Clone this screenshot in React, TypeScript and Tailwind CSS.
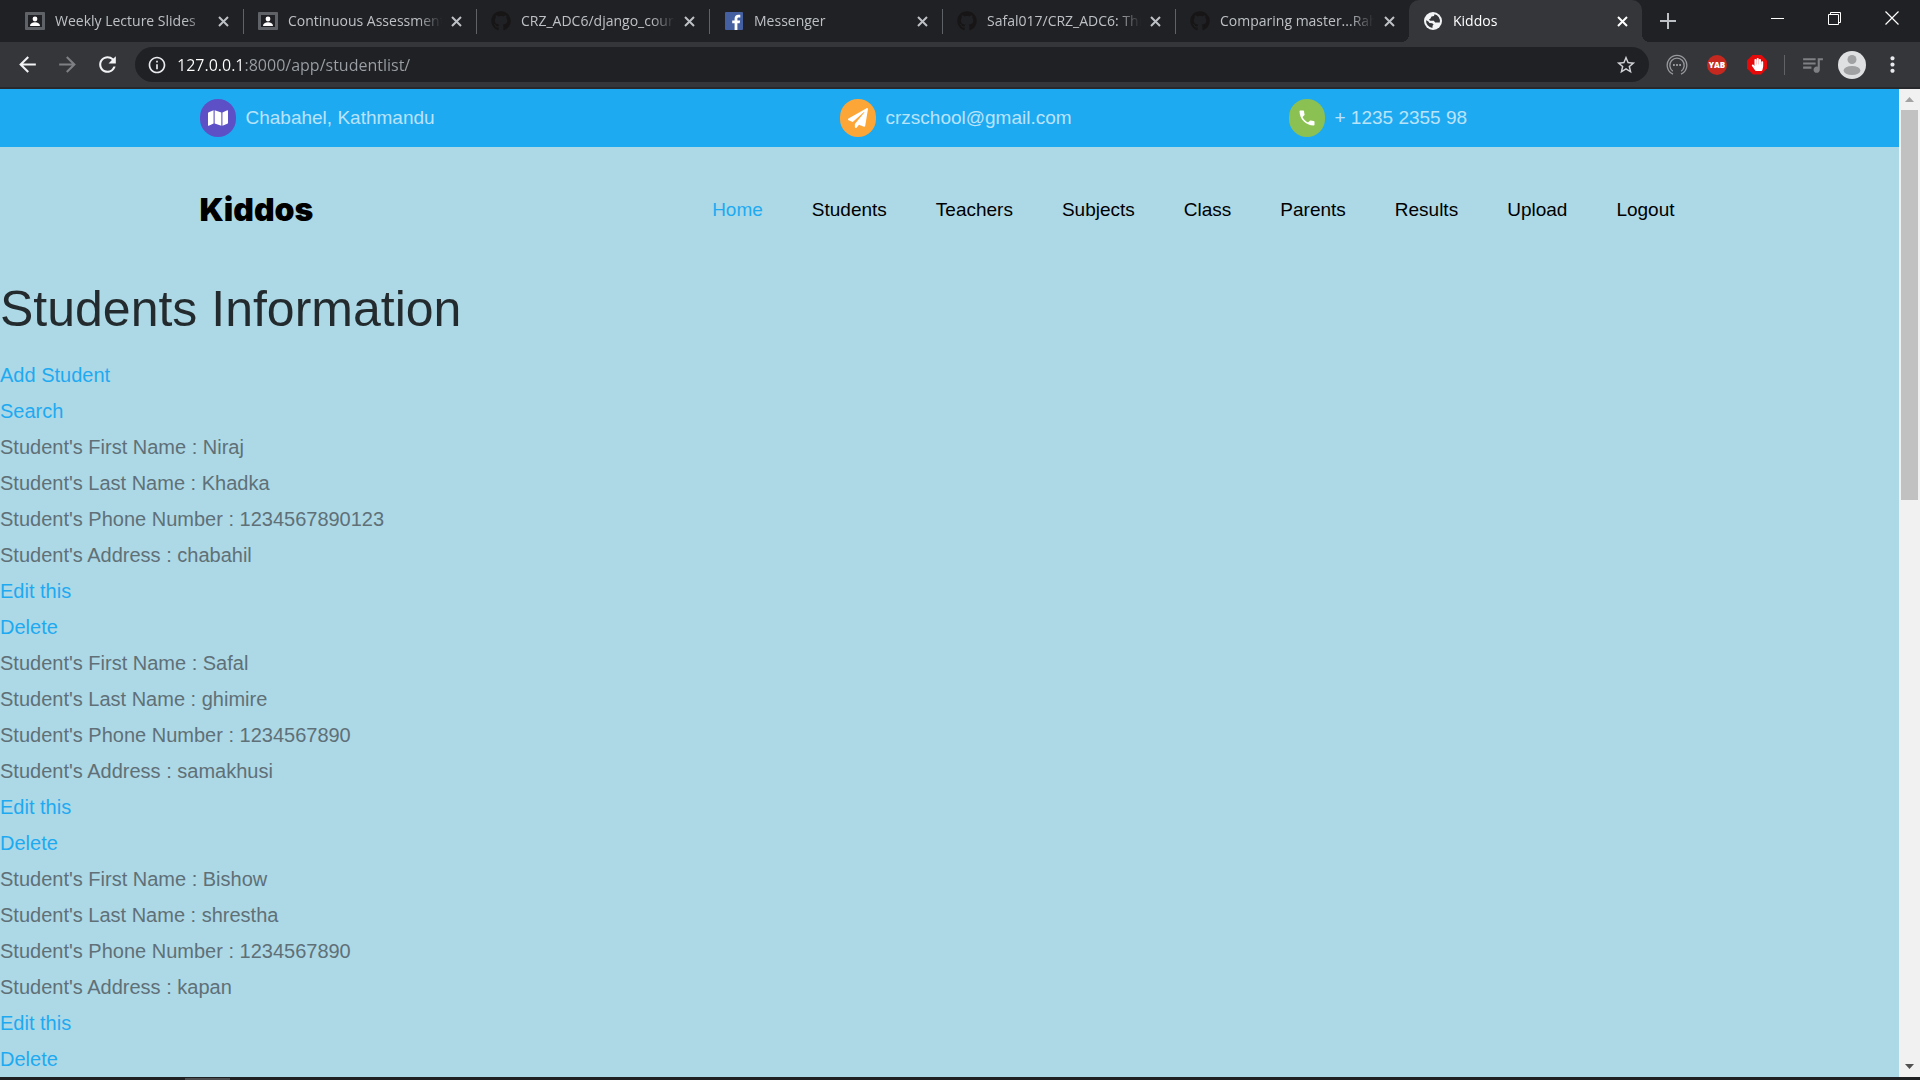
import type { ReactNode } from "react";
import { FaGithub, FaHandPaper, FaMap, FaPaperPlane } from "react-icons/fa";
import {
  MdArrowBack,
  MdArrowForward,
  MdInfoOutline,
  MdMoreVert,
  MdPhone,
  MdQueueMusic,
  MdRefresh,
  MdStarBorder,
} from "react-icons/md";

function ClassroomIcon() {
  return (
    <svg width="20" height="18" viewBox="0 0 20 18" aria-hidden="true">
      <rect width="20" height="18" rx="1" fill="#5f6368" />
      <rect x="3" y="3" width="14" height="12" fill="#202124" />
      <circle cx="10" cy="7" r="2.4" fill="#fff" />
      <path d="M5 14c0-2.6 2.3-3.8 5-3.8s5 1.2 5 3.8z" fill="#fff" />
    </svg>
  );
}

function FacebookIcon() {
  return (
    <svg width="18" height="18" viewBox="0 0 18 18" aria-hidden="true">
      <rect width="18" height="18" rx="1" fill="#4460a0" />
      <path
        d="M9.6 18v-6.8H7.2V8.4h2.4V6.5c0-2.5 1.5-3.8 3.7-3.8.9 0 1.7.1 2 .1v2.6h-1.5c-1.2 0-1.4.6-1.4 1.4v1.6h2.7l-.4 2.8h-2.3V18z"
        fill="#fff"
      />
    </svg>
  );
}

function GlobeIcon() {
  return (
    <svg width="18" height="18" viewBox="0 0 18 18" aria-hidden="true">
      <circle cx="9" cy="9" r="9" fill="#f1f3f4" />
      <path
        d="M10.5 2.2 L10 4 L7.5 4.6 L6.5 6.6 L5 7.6 L6 8.8 L9.8 8.8 L11.2 10.6 L15.8 10.4 A7 7 0 0 0 10.5 2.2 Z"
        fill="#35363a"
      />
      <path
        d="M2.1 8.2 L4.4 9.4 L5.4 11 L8.2 11.2 L9.6 12.6 L8.6 13.8 L8.4 15.9 A7 7 0 0 1 2.1 8.2 Z"
        fill="#35363a"
      />
    </svg>
  );
}

function CloseIcon() {
  return (
    <svg width="11" height="11" viewBox="0 0 11 11" stroke="currentColor" strokeWidth="2" aria-hidden="true">
      <path d="M1 1l9 9M10 1l-9 9" />
    </svg>
  );
}

function RelayIcon() {
  return (
    <svg width="22" height="22" viewBox="0 0 22 22" fill="none" stroke="#97999c" strokeWidth="1.3" aria-hidden="true">
      <path d="M7 20.2A9.8 9.8 0 1 1 15 20.2" />
      <path d="M6.8 17.2A7.2 7.2 0 1 1 15.2 17.2" />
      <path d="M7 11h1.8M10.1 11h1.8M13.2 11H15" strokeWidth="1.8" />
    </svg>
  );
}

function AvatarIcon() {
  return (
    <svg width="28" height="28" viewBox="0 0 28 28" aria-hidden="true">
      <circle cx="14" cy="14" r="14" fill="#dfe0e1" />
      <circle cx="14" cy="8.5" r="4.5" fill="#9fa1a3" />
      <ellipse cx="14" cy="19.5" rx="8.4" ry="4.5" fill="#9fa1a3" />
    </svg>
  );
}

const github = <FaGithub size={20} color="#171515" />;

const tabs: { title: string; icon: ReactNode; divider: boolean }[] = [
  { title: "Weekly Lecture Slides", icon: <ClassroomIcon />, divider: true },
  { title: "Continuous Assessment", icon: <ClassroomIcon />, divider: true },
  { title: "CRZ_ADC6/django_course", icon: github, divider: true },
  { title: "Messenger", icon: <FacebookIcon />, divider: true },
  { title: "Safal017/CRZ_ADC6: This", icon: github, divider: true },
  { title: "Comparing master...Rahul", icon: github, divider: false },
];

function TabContent({ title, icon }: { title: string; icon: ReactNode }) {
  return (
    <>
      <span className="flex w-5 shrink-0 justify-center">{icon}</span>
      <span className="ml-2.5 w-[154px] overflow-hidden whitespace-nowrap [mask-image:linear-gradient(90deg,#000_130px,transparent_154px)]">
        {title}
      </span>
      <button type="button" aria-label={`Close ${title}`} className="ml-auto flex w-5 items-center justify-center">
        <CloseIcon />
      </button>
    </>
  );
}

function TabStrip() {
  return (
    <div className="flex h-[42px] bg-[#202124] pl-[11px] text-sm text-[#bdc1c6]">
      {tabs.map((tab) => (
        <div key={tab.title} className="flex min-w-0 basis-[233px] items-center">
          <div className="flex min-w-0 flex-1 items-center pr-2.5 pl-3.5">
            <TabContent title={tab.title} icon={tab.icon} />
          </div>
          {tab.divider && <span className="h-[25px] w-px bg-[#5f6368]" />}
        </div>
      ))}
      <div className="relative flex min-w-0 basis-[233px] items-center rounded-t-[10px] bg-[#35363a] pr-2.5 pl-3.5 text-white before:absolute before:bottom-0 before:-left-2 before:size-2 before:bg-[radial-gradient(circle_at_0_0,transparent_8px,#35363a_8px)] after:absolute after:-right-2 after:bottom-0 after:size-2 after:bg-[radial-gradient(circle_at_100%_0,transparent_8px,#35363a_8px)]">
        <TabContent title="Kiddos" icon={<GlobeIcon />} />
      </div>
      <button type="button" aria-label="New tab" className="ml-2.5 flex w-8 items-center justify-center">
        <svg width="16" height="16" viewBox="0 0 16 16" stroke="#bdc1c6" strokeWidth="2" aria-hidden="true">
          <path d="M8 0v16M0 8h16" />
        </svg>
      </button>
      <div className="ml-auto flex h-9 text-white">
        <button type="button" aria-label="Minimize" className="flex w-[57px] items-center justify-center">
          <span className="h-px w-[13px] bg-white" />
        </button>
        <button type="button" aria-label="Restore" className="flex w-[57px] items-center justify-center">
          <svg width="13" height="13" viewBox="0 0 13 13" fill="none" stroke="currentColor" aria-hidden="true">
            <path d="M.5 2.5h10v10H.5zM2.5 2.5v-2h10v10h-2" />
          </svg>
        </button>
        <button type="button" aria-label="Close window" className="flex w-[57px] items-center justify-center">
          <svg width="14" height="14" viewBox="0 0 14 14" stroke="currentColor" strokeWidth="1.2" aria-hidden="true">
            <path d="M.5.5l13 13M13.5.5l-13 13" />
          </svg>
        </button>
      </div>
    </div>
  );
}

function ToolButton({ label, children }: { label: string; children: ReactNode }) {
  return (
    <button type="button" aria-label={label} className="flex h-9 w-10 shrink-0 items-center justify-center">
      {children}
    </button>
  );
}

function Toolbar() {
  return (
    <div className="flex h-[47px] items-center border-b-2 border-[#28292c] bg-[#35363a] pr-2 pl-[7px]">
      <ToolButton label="Back">
        <MdArrowBack size={25} color="#f1f3f4" />
      </ToolButton>
      <ToolButton label="Forward">
        <MdArrowForward size={25} color="#7e8083" />
      </ToolButton>
      <ToolButton label="Reload">
        <MdRefresh size={25} color="#f1f3f4" />
      </ToolButton>
      <div className="mr-2 ml-2 flex h-[35px] flex-1 items-center rounded-full bg-[#202124] pr-3 pl-3">
        <MdInfoOutline size={20} color="#e8eaed" />
        <input
          aria-label="Address"
          defaultValue="127.0.0.1:8000/app/studentlist/"
          className="ml-2.5 min-w-0 flex-1 bg-[linear-gradient(90deg,#fff_68px,#9aa0a6_68px)] bg-clip-text text-base text-transparent outline-none"
        />
        <button type="button" aria-label="Bookmark this page">
          <MdStarBorder size={22} color="#d0d2d5" />
        </button>
      </div>
      <ToolButton label="Relay">
        <RelayIcon />
      </ToolButton>
      <ToolButton label="YAB">
        <span className="flex size-5 items-center justify-center rounded-full bg-[#c4281f] text-[8px] font-extrabold text-white">
          YAB
        </span>
      </ToolButton>
      <ToolButton label="Ad blocker">
        <span className="flex size-5 items-center justify-center bg-[#e60a0a] [clip-path:polygon(30%_0,70%_0,100%_30%,100%_70%,70%_100%,30%_100%,0_70%,0_30%)]">
          <FaHandPaper size={13} color="#fff" />
        </span>
      </ToolButton>
      <span className="mx-[7px] h-5 w-px bg-[#5f6368]" />
      <ToolButton label="Media controls">
        <MdQueueMusic size={25} color="#7e8083" />
      </ToolButton>
      <ToolButton label="Profile">
        <AvatarIcon />
      </ToolButton>
      <ToolButton label="Menu">
        <MdMoreVert size={25} color="#e8eaed" />
      </ToolButton>
    </div>
  );
}

function Contact({ icon, color, children }: { icon: ReactNode; color: string; children: ReactNode }) {
  return (
    <div className="flex items-center gap-2.5">
      <span className={`flex h-[38px] w-9 items-center justify-center rounded-full text-white ${color}`}>{icon}</span>
      <span className="leading-[30px]">{children}</span>
    </div>
  );
}

const navItems = ["Home", "Students", "Teachers", "Subjects", "Class", "Parents", "Results", "Upload", "Logout"];

const students = [
  { first: "Niraj", last: "Khadka", phone: "1234567890123", address: "chabahil" },
  { first: "Safal", last: "ghimire", phone: "1234567890", address: "samakhusi" },
  { first: "Bishow", last: "shrestha", phone: "1234567890", address: "kapan" },
];

function SitePage() {
  return (
    <div className="min-w-0 flex-1 bg-[#add8e6] font-['Liberation_Sans',Arial,sans-serif]">
      <div className="bg-[#1eaaf1] py-2.5 text-[19px] text-white/70">
        <div className="mx-auto grid max-w-[1500px] grid-cols-[640fr_449fr_411fr]">
          <Contact icon={<FaMap size={20} />} color="bg-[#5d50c6]">
            Chabahel, Kathmandu
          </Contact>
          <Contact icon={<FaPaperPlane size={20} />} color="bg-[#fda638]">
            crzschool@gmail.com
          </Contact>
          <Contact icon={<MdPhone size={20} />} color="bg-[#8bc152]">
            + 1235 2355 98
          </Contact>
        </div>
      </div>
      <header className="mx-auto flex h-[125px] max-w-[1500px] items-center justify-between">
        <a href="#home" className="font-[Inter,sans-serif] text-[32px] font-black text-black">
          Kiddos
        </a>
        <nav className="flex gap-[49px] px-[25px] text-[19px] leading-[30px] text-black">
          {navItems.map((item, i) => (
            <a key={item} href={`#${item.toLowerCase()}`} className={i === 0 ? "text-[#1eaaf1]" : "text-black"}>
              {item}
            </a>
          ))}
        </nav>
      </header>
      <main className="text-xl leading-9 text-[#5f7077]">
        <h1 className="mb-2.5 text-[50px] leading-[75px] text-black/80">Students Information</h1>
        <p>
          <a href="#add" className="text-[#1eaaf1]">
            Add Student
          </a>
        </p>
        <p>
          <a href="#search" className="text-[#1eaaf1]">
            Search
          </a>
        </p>
        {students.map((s) => (
          <section key={s.first}>
            <p>Student's First Name : {s.first}</p>
            <p>Student's Last Name : {s.last}</p>
            <p>Student's Phone Number : {s.phone}</p>
            <p>Student's Address : {s.address}</p>
            <p>
              <a href="#edit" className="text-[#1eaaf1]">
                Edit this
              </a>
            </p>
            <p>
              <a href="#delete" className="text-[#1eaaf1]">
                Delete
              </a>
            </p>
          </section>
        ))}
      </main>
    </div>
  );
}

function Scrollbar() {
  return (
    <div className="flex w-[21px] shrink-0 flex-col items-center bg-[#f1f1f1]" aria-hidden="true">
      <span className="flex h-[21px] items-center">
        <svg width="9" height="5" viewBox="0 0 9 5" fill="#a3a3a3">
          <path d="M4.5 0L9 5H0z" />
        </svg>
      </span>
      <span className="w-[17px] grow-[47] bg-[#c1c1c1]" />
      <span className="grow-[67]" />
      <span className="flex h-[21px] items-center">
        <svg width="9" height="5" viewBox="0 0 9 5" fill="#505050">
          <path d="M4.5 5L9 0H0z" />
        </svg>
      </span>
    </div>
  );
}

export default function App() {
  return (
    <div className="flex min-h-screen flex-col bg-[#202124] font-['Open_Sans','Noto_Sans',sans-serif]">
      <TabStrip />
      <Toolbar />
      <div className="flex flex-1">
        <SitePage />
        <Scrollbar />
      </div>
      <div className="flex h-[3px] bg-[#1f2021] pl-[185px]">
        <span className="mt-px w-[45px] bg-[#4c4d4e]" />
      </div>
    </div>
  );
}
